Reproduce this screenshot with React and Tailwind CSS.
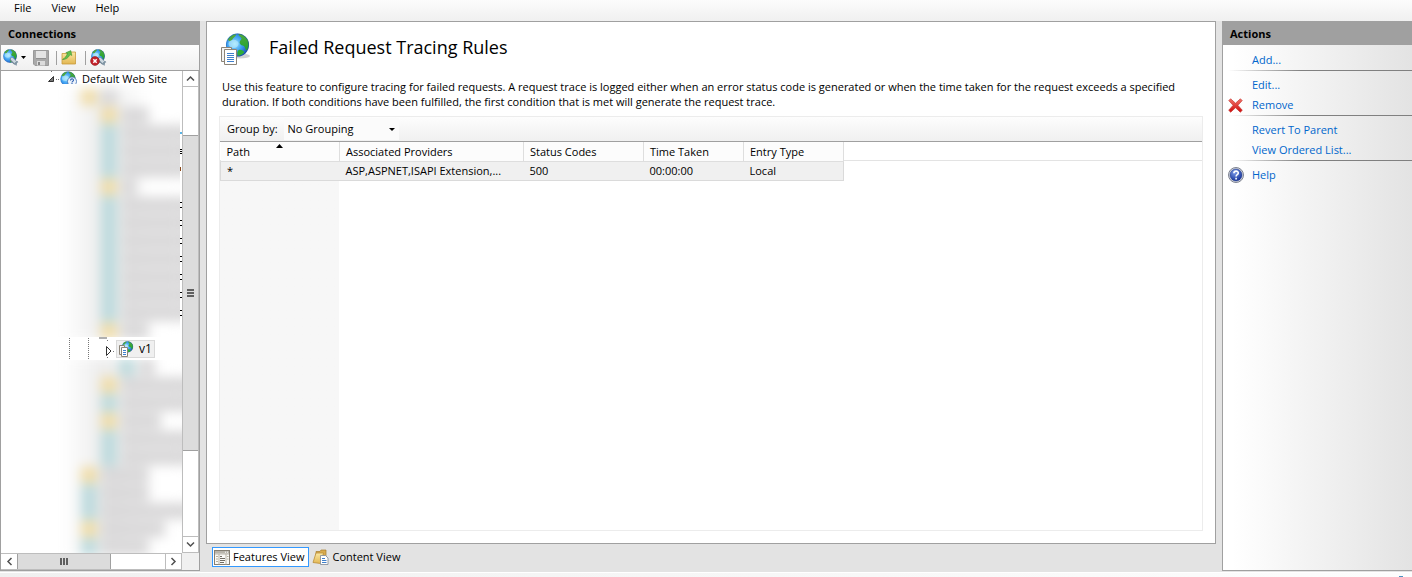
import React from "react";

/* ---------- icons ---------- */

function GlobeShape({ cx, cy, r }) {
  const k = r / 10;
  return (
    <g transform={`translate(${cx} ${cy}) scale(${k})`}>
      <circle r="10" fill="url(#sea)" />
      <path d="M1 -9.6C4 -9.6 7.5 -7 9 -4.2C10 -1.5 9.8 1.5 8.4 4.4C6.8 4.6 6.8 2 5.6 .8C4 0 2.8 .4 2 -1.6C1.4 -3.6 4 -4.4 3.4 -6C2.6 -7.4 .6 -8 1 -9.6Z" fill="url(#land)" />
      <path d="M-8.4 -4.6C-6.8 -7.6 -4.4 -9 -1.4 -9.4C-1 -7.6 -3.6 -6.6 -4.4 -5C-5 -3 -7.4 -3.2 -8.4 -4.6Z" fill="#4fa83c" />
      <path d="M1 4.4C3 3.8 5 4.6 6 6.4C4.6 8.4 2.4 9.4 .6 9.6C-.4 8 -.4 5.6 1 4.4Z" fill="#2fae38" />
      <ellipse cx="-3.4" cy="-1" rx="4.4" ry="3.6" fill="#c4f1ff" opacity=".55" />
      <circle r="9.7" fill="none" stroke="#12356f" strokeWidth=".6" opacity=".35" />
    </g>
  );
}

function Defs() {
  return (
    <svg width="0" height="0" className="absolute" aria-hidden="true">
      <defs>
        <radialGradient id="sea" cx=".38" cy=".45" r=".66">
          <stop offset="0" stopColor="#9fe6fd" />
          <stop offset=".5" stopColor="#3d9ff2" />
          <stop offset="1" stopColor="#1a48ac" />
        </radialGradient>
        <linearGradient id="land" x1="0" y1="0" x2="0" y2="1">
          <stop offset="0" stopColor="#4fa83c" />
          <stop offset="1" stopColor="#22a52f" />
        </linearGradient>
        <linearGradient id="folder" x1="0" y1="0" x2="0" y2="1">
          <stop offset="0" stopColor="#fbe9a6" />
          <stop offset="1" stopColor="#e2b651" />
        </linearGradient>
        <radialGradient id="help" cx=".4" cy=".3" r=".7">
          <stop offset="0" stopColor="#7b9be8" />
          <stop offset="1" stopColor="#16349a" />
        </radialGradient>
        <linearGradient id="cross" x1="0" y1="0" x2="0" y2="1">
          <stop offset="0" stopColor="#f2756b" />
          <stop offset="1" stopColor="#cf0a0a" />
        </linearGradient>
      </defs>
    </svg>
  );
}

function ConnectIcon({ removed }) {
  return (
    <svg width="17" height="17" viewBox="0 0 17 17" aria-hidden="true">
      <GlobeShape cx={8} cy={7} r={6.8} />
      <path d="M10 10.500l3 3" stroke="#6f8494" strokeWidth="4.400" strokeLinecap="round" />
      <path d="M10 10l3 3" stroke="#cbd7df" strokeWidth="2.600" strokeLinecap="round" />
      <path d="M13 14l3-1.400M13 14l1.600 2.400" stroke="#8095a4" strokeWidth="1.300" />
      {removed && (
        <g>
          <circle cx="5" cy="12" r="4.400" fill="#c4202a" stroke="#8c1a1a" strokeWidth=".6" />
          <path d="M3.300 10.300l3.400 3.400M6.700 10.300l-3.400 3.400" stroke="#fff" strokeWidth="1.500" />
        </g>
      )}
    </svg>
  );
}

function SaveIcon() {
  return (
    <svg width="16" height="16" viewBox="0 0 16 16" aria-hidden="true">
      <path d="M.5 .5h15v15H2L.5 14z" fill="#a9a9a9" stroke="#9a9a9a" />
      <rect x="3" y="1" width="10" height="7" fill="#e4e4e4" />
      <rect x="3" y="8" width="10" height="1" fill="#909090" />
      <rect x="4" y="11" width="8" height="4.500" fill="#dcdcdc" />
      <rect x="5" y="12" width="2" height="3" fill="#858585" />
    </svg>
  );
}

function UpFolderIcon() {
  return (
    <svg width="16" height="15" viewBox="0 0 16 15" aria-hidden="true">
      <path d="M1 3.500h7l1.500-1.500H14.500V14H1z" fill="url(#folder)" stroke="#c79a3c" strokeWidth=".8" />
      <path d="M1.500 9.500C3.500 8.500 5.200 6.500 6.500 3.500L4.800 2.700L9.800 .6L10.800 5.500L9 4.600C7.500 8 4.500 9.800 1.500 9.500z" fill="#5fbf4c" stroke="#2f8a2b" strokeWidth=".5" />
    </svg>
  );
}

function SiteIcon() {
  return (
    <svg width="17" height="16" viewBox="0 0 17 16" className="shrink-0" aria-hidden="true">
      <GlobeShape cx={8} cy={8} r={7.600} />
      <circle cx="12" cy="10.500" r="4.500" fill="#eef4fb" stroke="#3b6fb5" strokeWidth=".8" />
      <path d="M10.500 9.400c0-2 3-2 3-.2 0 1.200-1.500 1.200-1.500 2.200M12 12v1.100" stroke="#2a5db0" strokeWidth="1.100" fill="none" />
    </svg>
  );
}

function PagesGlobeIcon() {
  return (
    <svg width="32" height="34" viewBox="0 0 32 34" className="shrink-0" aria-hidden="true">
      <ellipse cx="20" cy="23" rx="10" ry="2.500" fill="#000" opacity=".18" />
      <GlobeShape cx={17.500} cy={12} r={11.500} />
      <path d="M1.500 14.500h10v14h-10z" fill="#f4f4f4" stroke="#8c8478" />
      <path d="M4.500 16.500h12v15h-12z" fill="#fff" stroke="#8c8478" />
      <path d="M7 20.500h7M7 22.500h7M7 24.500h7M7 26.500h7M7 28.500h7" stroke="#3f7fcb" />
    </svg>
  );
}

function SmallPagesGlobeIcon() {
  return (
    <svg width="15" height="16" viewBox="0 0 15 16" className="shrink-0" aria-hidden="true">
      <GlobeShape cx={8.500} cy={5.800} r={5.600} />
      <path d="M.5 4.500h5v9h-5z" fill="#f4f4f4" stroke="#8c8478" />
      <path d="M2.500 6.500h6v9h-6z" fill="#fff" stroke="#8c8478" />
      <path d="M4 9.500h3M4 11.500h3M4 13.500h3" stroke="#3f7fcb" />
    </svg>
  );
}

function FeaturesIcon() {
  return (
    <svg width="16" height="15" viewBox="0 0 16 15" aria-hidden="true">
      <rect x=".5" y=".5" width="15" height="14" fill="#fbfaf6" stroke="#857f73" />
      <rect x="1" y="1" width="14" height="2.500" fill="#b9b5ab" />
      <path d="M11 2.200h1M13 2.200h1" stroke="#fff" />
      <path d="M5 4v10.500M12 4v10.500M1 4h14" stroke="#b9b4a8" />
      <path d="M2 6.500h2M2 9h2M2 11.500h2M13 6.500h1.500M13 9h1.500" stroke="#b7b09c" />
      <path d="M6 6.500h2M6 8.500h5M6 10.500h5M6 12.500h4" stroke="#716c63" />
    </svg>
  );
}

function ContentIcon() {
  return (
    <svg width="17" height="16" viewBox="0 0 17 16" aria-hidden="true">
      <path d="M4 2.500h4l1-1.500h5v10H4z" fill="#d9ab4e" stroke="#a67c2d" strokeWidth=".7" />
      <path d="M1 13.500L4 4h7.500L8.500 14.500z" fill="url(#folder)" stroke="#b98d38" strokeWidth=".8" />
      <path d="M8.500 6.500h5l2.500 2.500v6.500H8.500z" fill="#fff" stroke="#7f8894" strokeWidth=".8" />
      <path d="M10 9.500h3M10 11.500h4.500M10 13.500h4.500" stroke="#3f7fcb" />
    </svg>
  );
}

function RemoveIcon() {
  return (
    <svg width="15" height="15" viewBox="0 0 15 15" aria-hidden="true">
      <path d="M2.600 .8L7.500 5.200L12.400 .8L14.200 2.600L9.900 7.300L14.300 12.300L12.300 14.200L7.500 9.700L2.700 14.200L.7 12.300L5.100 7.300L.8 2.600z" fill="url(#cross)" stroke="#c43a35" strokeWidth=".7" strokeLinejoin="round" />
    </svg>
  );
}

function HelpIcon() {
  return (
    <svg width="16" height="16" viewBox="0 0 16 16" aria-hidden="true">
      <circle cx="8" cy="8" r="7.500" fill="#d8dbe2" stroke="#707684" strokeWidth=".9" />
      <circle cx="8" cy="8" r="6" fill="url(#help)" stroke="#233a86" strokeWidth=".5" />
      <path d="M5.900 6.300c0-3 4.400-2.800 4.400-.3 0 1.700-2.200 1.600-2.200 3.400M8.100 10.700v1.700" stroke="#fff" strokeWidth="1.600" fill="none" />
    </svg>
  );
}

function Chevron({ d }) {
  return (
    <svg width="9" height="9" viewBox="0 0 9 9" aria-hidden="true">
      <path d={d} fill="none" stroke="#505050" strokeWidth="1.500" />
    </svg>
  );
}

/* ---------- connections tree ---------- */

const indent = { 0: "pl-[26px]", 1: "pl-[46px]", 2: "pl-[64px]" };
const labelWidth = {
  xs: "w-4",
  sm: "w-7",
  md: "w-10",
  lg: "w-12",
  xl: "w-16",
  full: "w-28",
};

const upperRows = [
  [0, "folder", "xs"],
  [1, "folder", "sm"],
  [1, "file", "full"],
  [1, "file", "full"],
  [1, "file", "full"],
  [1, "folder", "xs"],
  [1, "file", "full"],
  [1, "file", "full"],
  [1, "file", "full"],
  [1, "file", "full"],
  [1, "file", "full"],
  [1, "file", "full"],
  [1, "file", "full"],
  [1, "folder", "sm"],
];

const lowerRows = [
  [2, "file", "xs"],
  [1, "folder", "full"],
  [1, "file", "full"],
  [1, "folder", "md"],
  [1, "file", "full"],
  [1, "file", "full"],
  [0, "folder", "lg"],
  [0, "file", "lg"],
  [0, "file", "full"],
  [0, "folder", "xl"],
  [0, "file", "lg"],
];

function BlurredRows({ rows }) {
  return (
    <ul className="blur-[6px]" aria-hidden="true">
      {rows.map(([level, kind, width], i) => (
        <li key={i} className={`flex h-[18px] items-center gap-1 bg-linear-to-r from-white from-5% via-[#ebebeb] via-40% to-white to-75% ${indent[level]}`}>
          <span className={`w-4 shrink-0 ${kind === "folder" ? "h-4 bg-[#f0dca6]" : "h-[18px] bg-[#bddadd]"}`} />
          <span className={`h-4 shrink-0 bg-[#d9d8d9] ${labelWidth[width]}`} />
        </li>
      ))}
    </ul>
  );
}

function Tree() {
  return (
    <div className="flex min-w-0 flex-1 flex-col overflow-hidden">
      <div className="flex h-[13px] shrink-0 items-start pl-[47px] text-[11px] leading-4">
        <svg width="12" height="13" viewBox="0 0 12 13" className="shrink-0" aria-hidden="true">
          <path d="M5.500 5.500v5H.5z" fill="#777" stroke="#333" />
          <path d="M8 8.500h1M10 8.500h1M3 .5h1" stroke="#777" />
        </svg>
        <SiteIcon />
        <span className="pl-[5px] whitespace-nowrap">Default Web Site</span>
      </div>
      <div className="flex h-[253px] shrink-0">
        <div className="ml-[54px] w-[125px] overflow-hidden bg-white pt-1">
          <BlurredRows rows={upperRows} />
        </div>
        <div className="flex w-0.5 flex-col pt-10" aria-hidden="true">
          <span className="flex h-[18px] flex-col justify-center"><i className="h-0.5 bg-[#59b4e6]" /></span>
          <span className="flex h-[18px] flex-col justify-center gap-px"><i className="h-px bg-black" /><i className="h-px bg-black" /><i className="h-px bg-black" /></span>
          <span className="flex h-[18px] flex-col justify-center"><i className="h-1 w-px bg-[#8b4a1a]" /></span>
          <span className="h-[18px]" />
          {[0, 1, 2, 3, 4, 5, 6].map((i) => (
            <span key={i} className="flex h-[18px] flex-col justify-center gap-1"><i className="h-px bg-black" /><i className="h-px bg-black" /></span>
          ))}
        </div>
      </div>
      <div className="flex h-[23px] shrink-0 items-center">
        <svg width="115" height="23" viewBox="0 0 115 23" className="shrink-0" aria-hidden="true">
          <path d="M68.500 1v22M87.500 1v22M106.500 3v2M106.500 20v2" stroke="#777" strokeDasharray="1 1" />
          <path d="M98 1h8" stroke="#b0b0b0" strokeWidth="2" />
          <path d="M105.500 9.500v9l4.500-4.500z" fill="#fff" stroke="#333" />
          <path d="M112 14.500h1" stroke="#777" />
        </svg>
        <button type="button" className="flex h-[18px] items-center gap-[5px] border border-[#d9d9d9] bg-[#f0f0f0] px-0.5 text-xs">
          <SmallPagesGlobeIcon />v1
        </button>
      </div>
      <div className="ml-[54px] min-h-0 flex-1 overflow-hidden">
        <div className="-mt-0.5">
          <BlurredRows rows={lowerRows} />
        </div>
      </div>
    </div>
  );
}

function VerticalScroll() {
  return (
    <div className="flex w-[17px] shrink-0 flex-col border-x border-[#bdbdbd] bg-white" aria-hidden="true">
      <span className="flex h-4 items-center justify-center border-b border-[#bdbdbd]"><Chevron d="M1 6.500L4.500 3L8 6.500" /></span>
      <span className="flex-[48]" />
      <span className="flex flex-[316] flex-col items-center justify-center gap-px border-y border-[#a0a0a0] bg-[#dcdcdc]">
        <i className="h-0.5 w-[7px] bg-[#606060]" /><i className="h-0.5 w-[7px] bg-[#606060]" /><i className="h-0.5 w-[7px] bg-[#606060]" />
      </span>
      <span className="flex-[85]" />
      <span className="flex h-[17px] items-center justify-center border-y border-[#bdbdbd]"><Chevron d="M1 2.500L4.500 6L8 2.500" /></span>
    </div>
  );
}

function HorizontalScroll() {
  return (
    <div className="flex h-[17px] shrink-0 bg-[#f0f0f0]" aria-hidden="true">
      <div className="flex flex-1 border-y border-[#bdbdbd] bg-white">
        <span className="flex w-[17px] items-center justify-center border-r border-[#a0a0a0]"><Chevron d="M6.500 1L3 4.500L6.500 8" /></span>
        <span className="flex flex-[93] items-center justify-center gap-px border-r border-[#a0a0a0] bg-[#dcdcdc]">
          <i className="h-[7px] w-0.5 bg-[#606060]" /><i className="h-[7px] w-0.5 bg-[#606060]" /><i className="h-[7px] w-0.5 bg-[#606060]" />
        </span>
        <span className="flex-[54]" />
        <span className="flex w-[17px] items-center justify-center border-x border-[#bdbdbd]"><Chevron d="M2.500 1L6 4.500L2.500 8" /></span>
      </div>
      <span className="w-[17px]" />
    </div>
  );
}

function Connections() {
  return (
    <aside className="flex w-[200px] shrink-0 flex-col border border-[#a0a0a0] bg-white">
      <h2 className="h-[23px] shrink-0 bg-[#a0a0a0] pl-[7px] text-[11px] leading-[23px] font-bold">Connections</h2>
      <div className="flex h-[26px] shrink-0 items-center border-b border-[#a0a0a0] bg-linear-to-b from-[#fdfdfd] to-[#f0f0f0] pl-px">
        <button type="button" aria-label="Connect" className="flex items-center gap-0.5">
          <ConnectIcon />
          <svg width="5" height="3" viewBox="0 0 5 3"><path d="M0 0h5L2.500 3z" /></svg>
        </button>
        <button type="button" aria-label="Save" className="ml-[7px]"><SaveIcon /></button>
        <span className="ml-[7px] h-3.5 w-px bg-[#a0a0a0]" />
        <button type="button" aria-label="Up" className="ml-1"><UpFolderIcon /></button>
        <span className="ml-2 h-3.5 w-px bg-[#a0a0a0]" />
        <button type="button" aria-label="Remove connection" className="ml-1"><ConnectIcon removed /></button>
      </div>
      <div className="flex min-h-0 flex-1">
        <Tree />
        <VerticalScroll />
      </div>
      <HorizontalScroll />
    </aside>
  );
}

/* ---------- rules ---------- */

const cell = "overflow-hidden px-1.5 text-left font-normal whitespace-nowrap text-ellipsis";

function Rules() {
  return (
    <main className="flex min-h-0 flex-1 flex-col border border-[#a0a0a0] bg-white px-3 pt-[11px] pb-3">
      <div className="flex h-[34px] items-start gap-[17px] pl-px">
        <PagesGlobeIcon />
        <h1 className="pt-0.5 text-lg leading-6">Failed Request Tracing Rules</h1>
      </div>
      <p className="mt-3 pl-[3px] text-[11px] leading-[15px]">
        Use this feature to configure tracing for failed requests. A request trace is logged either when an error status code is generated or when the time taken for the request exceeds a specified duration. If both conditions have been fulfilled, the first condition that is met will generate the request trace.
      </p>
      <div className="mt-[7px] flex min-h-0 flex-1 flex-col border border-[#ececec]">
        <div className="flex h-[25px] shrink-0 items-center border-b border-[#a0a0a0] bg-linear-to-b from-[#fdfdfd] to-[#f0f0f0] pl-[7px] text-[11px]">
          <label htmlFor="group">Group by:</label>
          <div className="ml-1.5 flex items-center bg-[#fbfbfb] pr-1">
            <select id="group" className="w-[105px] appearance-none bg-transparent pl-1 leading-[22px]">
              <option>No Grouping</option>
            </select>
            <svg width="6" height="3" viewBox="0 0 6 3" aria-hidden="true"><path d="M0 0h6L3 3z" /></svg>
          </div>
        </div>
        <div className="flex-1 bg-linear-to-r from-[#f7f7f7] from-[119px] to-white to-[119px]">
          <div className="border-b border-[#e3e3e3] bg-white">
            <div className="h-[18px]" />
          </div>
          <table className="-mt-[19px] w-[623px] table-fixed border-collapse text-[11px] leading-[17px]">
            <colgroup>
              <col className="w-[119px]" />
              <col className="w-[184px]" />
              <col className="w-[120px]" />
              <col className="w-[100px]" />
              <col className="w-[100px]" />
            </colgroup>
            <thead>
              <tr className="h-[19px] bg-[#fcfcfc]">
                <th className={`${cell} border-r border-b border-[#dedede]`}>
                  <span className="flex items-start">
                    Path
                    <svg width="7" height="4" viewBox="0 0 7 4" className="ml-[26px] mt-px" aria-hidden="true"><path d="M0 4h7L3.500 0z" /></svg>
                  </span>
                </th>
                {["Associated Providers", "Status Codes", "Time Taken", "Entry Type"].map((h) => (
                  <th key={h} className={`${cell} border-r border-b border-[#dedede]`}>{h}</th>
                ))}
              </tr>
            </thead>
            <tbody>
              <tr className="h-[19px] border border-[#dadada] bg-[#f0f0f0]">
                {["*", "ASP,ASPNET,ISAPI Extension,...", "500", "00:00:00", "Local"].map((v) => (
                  <td key={v} className={cell}>{v}</td>
                ))}
              </tr>
            </tbody>
          </table>
        </div>
      </div>
    </main>
  );
}

/* ---------- actions ---------- */

const actionGroups = [
  [["Add..."]],
  [["Edit..."], ["Remove", RemoveIcon]],
  [["Revert To Parent"], ["View Ordered List..."]],
  [["Help", HelpIcon]],
];

function Actions() {
  return (
    <aside className="w-[190px] shrink-0 border-y border-l border-[#a0a0a0] bg-linear-to-r from-white from-5% to-[#e3e3e3]">
      <h2 className="h-[23px] bg-[#a0a0a0] pl-[7px] text-[11px] leading-[23px] font-bold">Actions</h2>
      <nav className="pt-[5px] text-[11px]">
        {actionGroups.map((group, i) => (
          <ul key={i} className="mb-1">
            {group.map(([label, Icon]) => (
              <li key={label} className="flex h-5 items-center">
                <span className="flex w-[29px] justify-center pr-1">{Icon && <Icon />}</span>
                <a href="#" className="text-[#0066cc]">{label}</a>
              </li>
            ))}
            {i < 3 && <li className="ml-[5px] h-px bg-linear-to-r from-transparent via-[#808080] via-40% to-[#808080]" />}
          </ul>
        ))}
      </nav>
    </aside>
  );
}

export default function App() {
  return (
    <div className="flex h-screen flex-col overflow-hidden bg-[#e3e3e3] font-['Open_Sans','Noto_Sans',sans-serif] text-black">
      <Defs />
      <header className="flex h-[21px] shrink-0 gap-5 bg-linear-to-b from-[#fcfcfc] to-[#f0f0f0] pl-[14px] text-[11px]">
        <button type="button" className="h-4">File</button>
        <button type="button" className="h-4">View</button>
        <button type="button" className="h-4">Help</button>
      </header>
      <div className="flex min-h-0 flex-1">
        <Connections />
        <div className="mr-1.5 ml-1.5 flex min-w-0 flex-1 flex-col">
          <Rules />
          <div className="flex h-[27px] shrink-0 items-start gap-[3px] pt-[3px] pl-1.5 text-[11px]">
            <button type="button" className="flex h-5 items-center gap-[3px] border border-[#3399ff] bg-white pr-1 pl-px">
              <FeaturesIcon />Features View
            </button>
            <button type="button" className="flex h-5 items-center gap-[3px]">
              <ContentIcon />Content View
            </button>
          </div>
        </div>
        <Actions />
      </div>
      <footer className="mt-px flex h-[5px] shrink-0 items-end justify-end border-t border-white bg-linear-to-r from-[#f0f0f0] to-[#fdfdfd] pr-[9px]">
        <span className="h-px w-1 bg-[#4a90c2]" />
      </footer>
    </div>
  );
}
